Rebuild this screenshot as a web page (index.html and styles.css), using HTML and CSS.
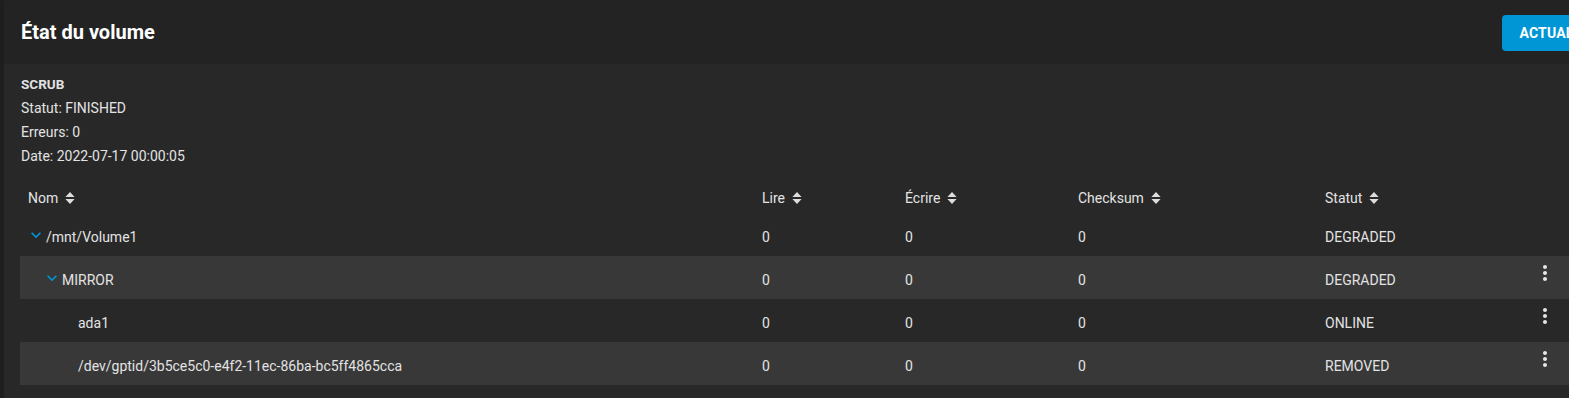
FILE: index.html
```html
<!DOCTYPE html>
<html lang="fr">
<head>
<meta charset="utf-8">
<title>État du volume</title>
<link rel="stylesheet" href="styles.css">
</head>
<body>
<div class="page">
  <div class="card">
    <div class="card-header">
      <h3 class="card-title">État du volume</h3>
      <button class="btn-primary">ACTUALISER</button>
    </div>
    <div class="card-body">
      <div class="scrub">
        <div class="scrub-title">SCRUB</div>
        <div class="scrub-line">Statut: FINISHED</div>
        <div class="scrub-line">Erreurs: 0</div>
        <div class="scrub-line">Date: 2022-07-17 00:00:05</div>
      </div>
      <div class="table">
        <div class="row head">
          <div class="cell name-head">Nom <svg class="sort" viewBox="0 0 10 12"><path d="M5 0 L9.6 5 H0.4Z M0.4 7 H9.6 L5 12Z"/></svg></div>
          <div class="cell">Lire <svg class="sort" viewBox="0 0 10 12"><path d="M5 0 L9.6 5 H0.4Z M0.4 7 H9.6 L5 12Z"/></svg></div>
          <div class="cell">Écrire <svg class="sort" viewBox="0 0 10 12"><path d="M5 0 L9.6 5 H0.4Z M0.4 7 H9.6 L5 12Z"/></svg></div>
          <div class="cell">Checksum <svg class="sort" viewBox="0 0 10 12"><path d="M5 0 L9.6 5 H0.4Z M0.4 7 H9.6 L5 12Z"/></svg></div>
          <div class="cell">Statut <svg class="sort" viewBox="0 0 10 12"><path d="M5 0 L9.6 5 H0.4Z M0.4 7 H9.6 L5 12Z"/></svg></div>
          <div class="cell"></div>
        </div>
        <div class="row">
          <div class="cell tree lvl0"><svg class="chev" viewBox="0 0 24 24"><path d="M16.59 8.59L12 13.17 7.41 8.59 6 10l6 6 6-6z"/></svg>/mnt/Volume1</div>
          <div class="cell">0</div>
          <div class="cell">0</div>
          <div class="cell">0</div>
          <div class="cell">DEGRADED</div>
          <div class="cell"></div>
        </div>
        <div class="row alt">
          <div class="cell tree lvl1"><svg class="chev" viewBox="0 0 24 24"><path d="M16.59 8.59L12 13.17 7.41 8.59 6 10l6 6 6-6z"/></svg>MIRROR</div>
          <div class="cell">0</div>
          <div class="cell">0</div>
          <div class="cell">0</div>
          <div class="cell">DEGRADED</div>
          <div class="cell actions"><svg class="kebab" viewBox="0 0 24 24"><path d="M12 8c1.1 0 2-.9 2-2s-.9-2-2-2-2 .9-2 2 .9 2 2 2zm0 2c-1.1 0-2 .9-2 2s.9 2 2 2 2-.9 2-2-.9-2-2-2zm0 6c-1.1 0-2 .9-2 2s.9 2 2 2 2-.9 2-2-.9-2-2-2z"/></svg></div>
        </div>
        <div class="row">
          <div class="cell tree lvl2"><span class="spacer"></span>ada1</div>
          <div class="cell">0</div>
          <div class="cell">0</div>
          <div class="cell">0</div>
          <div class="cell">ONLINE</div>
          <div class="cell actions"><svg class="kebab" viewBox="0 0 24 24"><path d="M12 8c1.1 0 2-.9 2-2s-.9-2-2-2-2 .9-2 2 .9 2 2 2zm0 2c-1.1 0-2 .9-2 2s.9 2 2 2 2-.9 2-2-.9-2-2-2zm0 6c-1.1 0-2 .9-2 2s.9 2 2 2 2-.9 2-2-.9-2-2-2z"/></svg></div>
        </div>
        <div class="row alt">
          <div class="cell tree lvl2"><span class="spacer"></span>/dev/gptid/3b5ce5c0-e4f2-11ec-86ba-bc5ff4865cca</div>
          <div class="cell">0</div>
          <div class="cell">0</div>
          <div class="cell">0</div>
          <div class="cell">REMOVED</div>
          <div class="cell actions"><svg class="kebab" viewBox="0 0 24 24"><path d="M12 8c1.1 0 2-.9 2-2s-.9-2-2-2-2 .9-2 2 .9 2 2 2zm0 2c-1.1 0-2 .9-2 2s.9 2 2 2 2-.9 2-2-.9-2-2-2zm0 6c-1.1 0-2 .9-2 2s.9 2 2 2 2-.9 2-2-.9-2-2-2z"/></svg></div>
        </div>
      </div>
    </div>
  </div>
</div>
</body>
</html>
```
FILE: styles.css
```css
html, body {
  margin: 0;
  padding: 0;
  overflow: hidden;
  background: #1e1e1e;
  font-family: Roboto, "Liberation Sans", sans-serif;
  color: #e3e3e3;
}

.page {
  padding-left: 4px;
  height: 398px;
}

.card {
  width: 1633px;
  height: 398px;
  background: #282828;
  border-radius: 4px 4px 0 0;
  overflow: hidden;
}

.card-header {
  height: 64px;
  box-sizing: border-box;
  background: #232323;
  display: flex;
  align-items: center;
  justify-content: space-between;
  padding: 0 16px 0 17px;
}

.card-title {
  margin: 0;
  font-size: 20px;
  font-weight: 700;
  color: #ffffff;
}

.btn-primary {
  margin-top: 2px;
  height: 36px;
  padding: 0 17px;
  border: none;
  border-radius: 4px;
  background: #0095d5;
  color: #ffffff;
  font-family: Roboto, "Liberation Sans", sans-serif;
  font-size: 14px;
  font-weight: 700;
  letter-spacing: 0.2px;
}

.card-body {
  padding: 8px 16px 0 16px;
}

.scrub {
  padding-left: 1px;
  font-size: 14px;
}

.scrub-title,
.scrub-line {
  line-height: 24px;
  height: 24px;
}

.scrub-title {
  font-size: 13.5px;
  font-weight: 700;
}

.table {
  margin-top: 9px;
  font-size: 14px;
}

.row {
  display: grid;
  grid-template-columns: 742px 143px 173px 247px 208px 40px;
  height: 43px;
  box-sizing: border-box;
  padding-top: 5px;
  align-items: center;
}

.row.head {
  height: 36px;
  padding-top: 6px;
}

.row.alt {
  background: #383838;
}

.cell {
  display: flex;
  align-items: center;
  white-space: nowrap;
}

.name-head {
  padding-left: 8px;
}

.sort {
  width: 10px;
  height: 12px;
  margin-left: 7px;
  fill: #dddddd;
}

.tree {
  padding-left: 6px;
}

.tree.lvl1 {
  padding-left: 22px;
}

.tree.lvl2 {
  padding-left: 38px;
}

.chev {
  width: 20px;
  height: 20px;
  fill: #0095d5;
  margin-bottom: 4px;
}

.spacer {
  display: inline-block;
  width: 20px;
}

.actions {
  align-self: start;
}

.kebab {
  width: 24px;
  height: 24px;
  fill: #e6e6e6;
}
```
